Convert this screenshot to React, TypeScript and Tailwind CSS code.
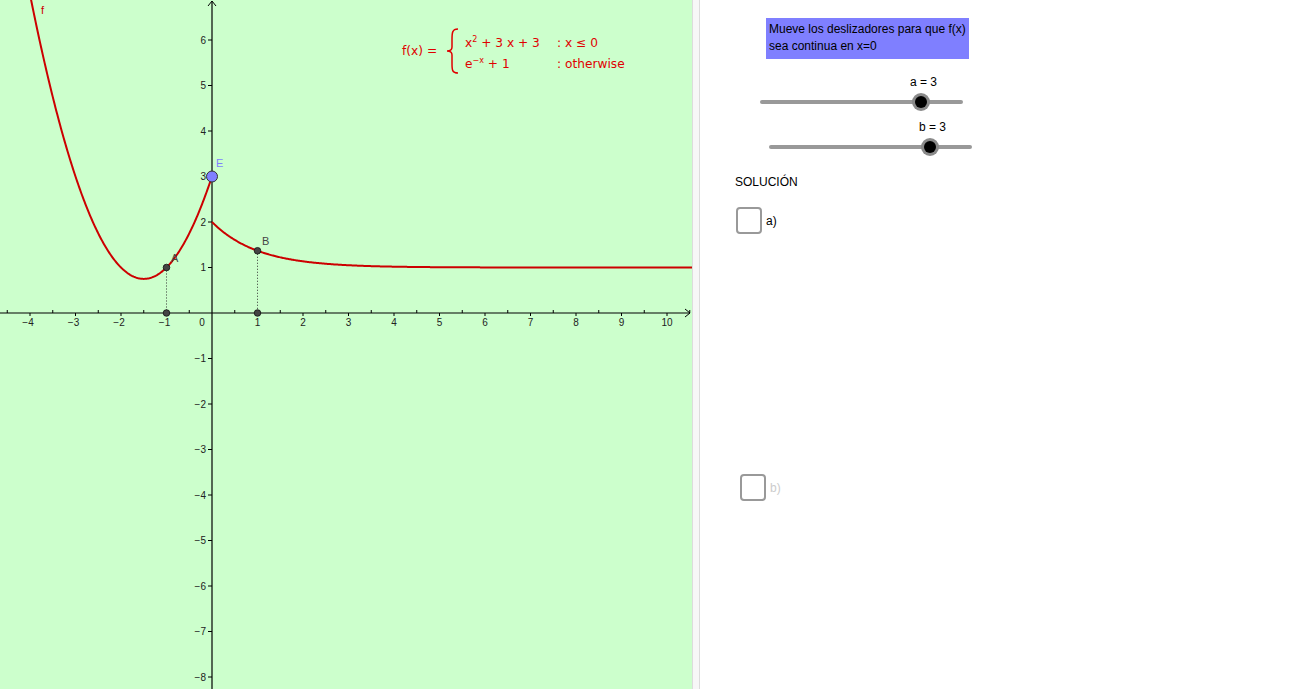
import React from 'react';

const U = 45.5;
const OX = 212;
const OY = 313;
const W = 692;
const H = 689;

const px = (x: number) => OX + x * U;
const py = (y: number) => OY - y * U;

function curve(f: (x: number) => number, a: number, b: number) {
  const pts: string[] = [];
  for (let x = a; x <= b + 1e-9; x += 0.02) {
    pts.push(`${px(x).toFixed(2)},${py(f(x)).toFixed(2)}`);
  }
  return 'M' + pts.join(' L');
}

const fmt = (n: number) => (n < 0 ? '\u2212' + Math.abs(n) : String(n));

function Graph() {
  const xs = [-4, -3, -2, -1, 1, 2, 3, 4, 5, 6, 7, 8, 9, 10];
  const ys = [-8, -7, -6, -5, -4, -3, -2, -1, 1, 2, 3, 4, 5, 6];
  const minorX: number[] = [];
  for (let x = -4.5; x <= 10.5; x += 1) minorX.push(x);

  const A = { x: px(-1), y: py(1) };
  const B = { x: px(1), y: py(Math.exp(-1) + 1) };
  const E = { x: px(0), y: py(3) };

  return (
    <svg width={W} height={H} viewBox={`0 0 ${W} ${H}`} className="block">
      {/* axes */}
      <line x1={0} y1={OY} x2={W - 2} y2={OY} stroke="#000" strokeWidth={1.2} />
      <path d={`M${W - 7},${OY - 4} L${W - 2},${OY} L${W - 7},${OY + 4}`} fill="none" stroke="#000" strokeWidth={1} />
      <line x1={OX} y1={H} x2={OX} y2={1} stroke="#000" strokeWidth={1.2} />
      <path d={`M${OX - 4},6 L${OX},1 L${OX + 4},6`} fill="none" stroke="#000" strokeWidth={1} />

      {/* ticks */}
      {xs.map((x) => (
        <line key={'tx' + x} x1={px(x)} y1={OY} x2={px(x)} y2={OY + 3} stroke="#000" strokeWidth={1} />
      ))}
      {minorX.map((x) => (
        <line key={'mx' + x} x1={px(x)} y1={OY - 3} x2={px(x)} y2={OY} stroke="#000" strokeWidth={1} />
      ))}
      {ys.map((y) => (
        <line key={'ty' + y} x1={OX - 4} y1={py(y)} x2={OX} y2={py(y)} stroke="#000" strokeWidth={1} />
      ))}

      {/* labels */}
      <g fontFamily="'Liberation Sans', Arial, sans-serif" fontSize={10} fill="#222">
        {xs.map((x) => (
          <text key={'lx' + x} x={px(x) - (x < 0 ? 2 : 0)} y={OY + 13} textAnchor="middle">
            {fmt(x)}
          </text>
        ))}
        <text x={OX - 10} y={OY + 13} textAnchor="middle">0</text>
        {ys.map((y) => (
          <text key={'ly' + y} x={OX - 6} y={py(y) + 3.5} textAnchor="end">
            {fmt(y)}
          </text>
        ))}
      </g>

      {/* function */}
      <path d={curve((x) => x * x + 3 * x + 3, -4.1, 0)} fill="none" stroke="#cc0000" strokeWidth={2} />
      <path d={curve((x) => Math.exp(-x) + 1, 0, 10.6)} fill="none" stroke="#cc0000" strokeWidth={2} />
      <text x={41} y={14} fontFamily="'Liberation Sans', Arial, sans-serif" fontSize={11} fill="#cc0000">f</text>

      {/* dotted projections */}
      <line x1={A.x} y1={A.y} x2={A.x} y2={OY} stroke="#333" strokeWidth={1} strokeDasharray="1 2" />
      <line x1={B.x} y1={B.y} x2={B.x} y2={OY} stroke="#333" strokeWidth={1} strokeDasharray="1 2" />

      {/* points */}
      {[A, B, { x: A.x, y: OY }, { x: B.x, y: OY }].map((p, i) => (
        <circle key={i} cx={p.x} cy={p.y} r={3.3} fill="#444" stroke="#111" strokeWidth={0.8} />
      ))}
      <circle cx={E.x} cy={E.y} r={5.5} fill="#7f7fff" stroke="#333" strokeWidth={1} />

      <g fontFamily="'Liberation Sans', Arial, sans-serif" fontSize={11}>
        <text x={171} y={262} fill="#444">A</text>
        <text x={262} y={245} fill="#444">B</text>
        <text x={216} y={167} fill="#7f7fff">E</text>
      </g>

      {/* formula */}
      <g fontFamily="'DejaVu Sans', sans-serif" fontSize={12.2} fill="#e00000">
        <text x={402} y={55}>f(x) =</text>
        <path d="M458,29 C452,29 452,33 452,40 L452,47 C452,50 450,51 447,51 C450,51 452,52 452,55 L452,63 C452,70 452,73 458,73" fill="none" stroke="#e00000" strokeWidth={1.5} />
        <text x={465} y={47}>
          x<tspan fontSize={8} dy={-5}>2</tspan><tspan dy={5}> + 3 x + 3</tspan>
        </text>
        <text x={557} y={47}>: x ≤ 0</text>
        <text x={465} y={68}>
          e<tspan fontSize={8} dy={-5}>−x</tspan><tspan dy={5}> + 1</tspan>
        </text>
        <text x={557} y={68}>: otherwise</text>
      </g>
    </svg>
  );
}

function Slider({ label, left }: { label: string; left: string }) {
  return (
    <div className={`${left} w-[203px]`}>
      <div className="pl-[150px] text-[12px] leading-[14px] text-black">{label}</div>
      <div className="relative mt-[11px] h-[4px] rounded-full bg-[#999]">
        <div className="absolute left-[152px] top-[-7px] flex h-[18px] w-[18px] items-center justify-center rounded-full bg-[#8a8a8a]">
          <div className="h-[12px] w-[12px] rounded-full bg-black" />
        </div>
      </div>
    </div>
  );
}

export default function App() {
  return (
    <div
      className="flex h-[689px] w-[1296px] overflow-hidden bg-white"
      style={{ fontFamily: "'Liberation Sans', Arial, sans-serif" }}
    >
      <div className="h-full w-[692px] shrink-0 bg-[#ccffcc]">
        <Graph />
      </div>
      <div className="h-full w-[8px] shrink-0 border-x border-[#dcdcdc] bg-[#f7f7f7]" />
      <div className="flex flex-1 flex-col">
        <div className="ml-[66px] mt-[18px] h-[41px] w-[203px] bg-[#7f7fff] px-[3px] pt-[3px] text-[12px] leading-[17px] text-black">
          <div className="whitespace-nowrap">Mueve los deslizadores para que f(x)</div>
          <div>sea continua en x=0</div>
        </div>
        <div className="mt-[16px]">
          <Slider label="a = 3" left="ml-[60px]" />
        </div>
        <div className="mt-[16px]">
          <Slider label="b = 3" left="ml-[69px]" />
        </div>
        <div className="ml-[35px] mt-[26px] text-[12px] leading-[14px] text-black">SOLUCIÓN</div>
        <div className="ml-[36px] mt-[18px] flex items-center gap-[4px]">
          <div className="h-[27px] w-[26px] rounded-[4px] border-2 border-[#999]" />
          <span className="text-[12px] text-black">a)</span>
        </div>
        <div className="ml-[40px] mt-[240px] flex items-center gap-[4px]">
          <div className="h-[27px] w-[26px] rounded-[4px] border-2 border-[#999]" />
          <span className="text-[12px] text-[#cccccc]">b)</span>
        </div>
      </div>
    </div>
  );
}
